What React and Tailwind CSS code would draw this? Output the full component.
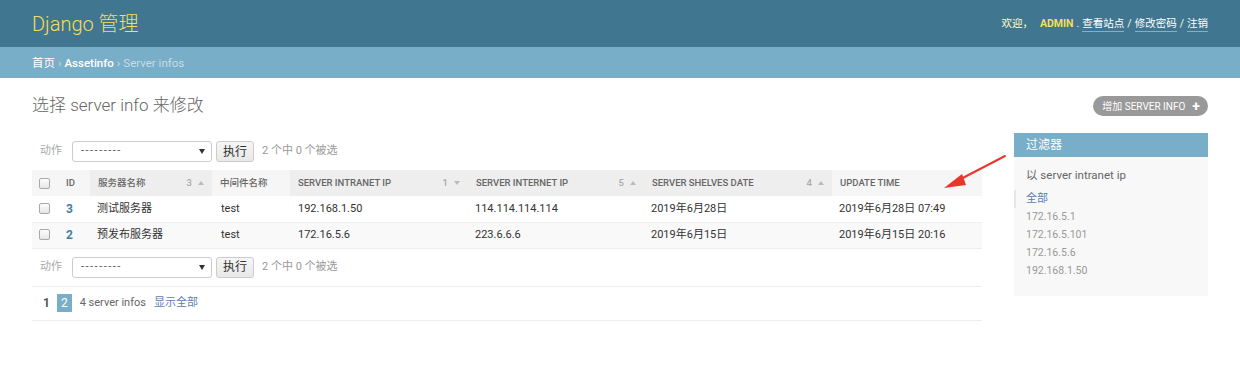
import React from "react";

const font = { fontFamily: 'Roboto, "Noto Sans CJK SC", "Liberation Sans", sans-serif' };

function Check() {
  return (
    <span className="inline-block w-[11px] h-[11px] rounded-[2px] border border-[#a9a9a9] bg-gradient-to-b from-[#fdfdfd] to-[#e6e6e6] align-middle" />
  );
}

function SortMark({ n, dir }) {
  return (
    <span className="ml-auto flex items-center gap-[6px] text-[9.5px] text-[#aaa] pr-[8px]">
      {n}
      {dir === "up" ? (
        <span className="w-0 h-0 border-x-[3.5px] border-x-transparent border-b-[4px] border-b-[#bbb]" />
      ) : (
        <span className="w-0 h-0 border-x-[3.5px] border-x-transparent border-t-[4px] border-t-[#bbb]" />
      )}
    </span>
  );
}

function Actions() {
  return (
    <div className="flex items-center h-[37px] pl-[8px] text-[11px]">
      <span className="text-[#aaa] w-[32px]">动作</span>
      <div className="flex items-center w-[140px] h-[21px] border border-[#ccc] rounded-[3px] bg-white pl-[8px] pr-[6px] text-[11px] text-[#555]">
        <span className="tracking-[1.5px]">---------</span>
        <span className="ml-auto w-0 h-0 border-x-[3px] border-x-transparent border-t-[5px] border-t-[#333]" />
      </div>
      <div className="ml-[4px] h-[21px] px-[6px] flex items-center border border-[#ccc] rounded-[3px] bg-gradient-to-b from-[#f6f6f6] to-[#e8e8e8] text-[#333] text-[12px]">
        执行
      </div>
      <span className="ml-[8px] text-[#999] text-[11px]">2 个中 0 个被选</span>
    </div>
  );
}

const cols = [
  { w: "w-[23px]", label: null },
  { w: "w-[35px]", label: "ID" },
  { w: "w-[122px]", label: "服务器名称", sort: ["3", "up"] },
  { w: "w-[78px]", label: "中间件名称" },
  { w: "w-[178px]", label: "SERVER INTRANET IP", sort: ["1", "down"] },
  { w: "w-[176px]", label: "SERVER INTERNET IP", sort: ["5", "up"] },
  { w: "w-[188px]", label: "SERVER SHELVES DATE", sort: ["4", "up"] },
  { w: "w-[150px]", label: "UPDATE TIME" },
];

const rows = [
  ["3", "测试服务器", "test", "192.168.1.50", "114.114.114.114", "2019年6月28日", "2019年6月28日 07:49"],
  ["2", "预发布服务器", "test", "172.16.5.6", "223.6.6.6", "2019年6月15日", "2019年6月15日 20:16"],
];

export default function App() {
  return (
    <div className="w-[1240px] h-[366px] bg-white relative overflow-hidden" style={font}>
      {/* Header */}
      <div className="h-[47px] bg-[#417690] flex items-center justify-between px-[32px]">
        <div className="text-[20px] font-light text-[#f5dd5d]">Django 管理</div>
        <div className="text-[10.5px] text-[#ffc] flex items-center gap-[3px] mt-[1px]">
          <span>欢迎，</span>
          <span className="font-bold text-[#f5dd5d] ml-[4px]">ADMIN</span>
          <span>.</span>
          <span className="text-white border-b border-white/40">查看站点</span>
          <span>/</span>
          <span className="text-white border-b border-white/40">修改密码</span>
          <span>/</span>
          <span className="text-white border-b border-white/40">注销</span>
        </div>
      </div>
      {/* Breadcrumbs */}
      <div className="h-[31px] bg-[#79aec8] flex items-center px-[32px] pt-[2px] text-[11.5px] text-[#c4dce8] gap-[3px]">
        <span className="text-white">首页</span>
        <span>›</span>
        <span className="text-white font-medium">Assetinfo</span>
        <span>›</span>
        <span>Server infos</span>
      </div>

      {/* Content */}
      <div className="px-[32px] pt-[17px]">
        <div className="flex items-center justify-between h-[22px]">
          <h1 className="text-[17px] font-light text-[#666]">选择 server info 来修改</h1>
          <div className="h-[20px] rounded-full bg-[#999] text-white text-[10px] flex items-center gap-[7px] pl-[9px] pr-[8px]">
            <span>增加 SERVER INFO</span>
            <span className="font-bold text-[14px] leading-none">+</span>
          </div>
        </div>

        <div className="flex mt-[16px] gap-[32px]">
          {/* Changelist */}
          <div className="w-[950px]">
            <Actions />
            <table className="table-fixed w-[950px] border-collapse">
              <thead>
                <tr className="h-[26px] text-[9.5px] text-[#666]">
                  {cols.map((c, i) => (
                    <th
                      key={i}
                      className={`${c.w} p-0 font-medium text-left ${c.sort ? "bg-[#eeeeee]" : "bg-[#f6f6f6]"}`}
                    >
                      <div className={`flex items-center ${i === 0 ? "pl-[7px]" : i === 1 ? "pl-[11px]" : "pl-[8px]"}`}>
                        {i === 0 ? <Check /> : <span>{c.label}</span>}
                        {c.sort && <SortMark n={c.sort[0]} dir={c.sort[1]} />}
                      </div>
                    </th>
                  ))}
                </tr>
              </thead>
              <tbody>
                {rows.map((r, ri) => (
                  <tr key={ri} className={`h-[26px] text-[11px] text-[#333] border-b border-[#eee] ${ri === 1 ? "bg-[#f9f9f9]" : "bg-white"}`}>
                    <td className="p-0 pl-[7px]"><Check /></td>
                    <td className="p-0 pl-[11px] font-bold text-[#447e9b] text-[12px]">{r[0]}</td>
                    <td className="p-0 pl-[7px]">{r[1]}</td>
                    <td className="p-0 pl-[9px]">{r[2]}</td>
                    <td className="p-0 pl-[8px]">{r[3]}</td>
                    <td className="p-0 pl-[7px]">{r[4]}</td>
                    <td className="p-0 pl-[7px]">{r[5]}</td>
                    <td className="p-0 pl-[7px]">{r[6]}</td>
                  </tr>
                ))}
              </tbody>
            </table>
            <div className="border-b border-[#eee]">
              <Actions />
            </div>
            <div className="h-[34px] flex items-center pl-[11px] text-[11px] text-[#666] border-b border-[#eee]">
              <span className="font-bold text-[#555] text-[12px]">1</span>
              <span className="ml-[7px] bg-[#79aec8] text-white text-[12px] px-[4px] leading-[18px]">2</span>
              <span className="ml-[8px]">4 server infos</span>
              <span className="ml-[8px] text-[#5b80b2]">显示全部</span>
            </div>
          </div>

          {/* Filter */}
          <div className="w-[194px] h-[163px] bg-[#f8f8f8]">
            <div className="h-[24px] bg-[#79aec8] text-white text-[12px] flex items-center pl-[12px]">过滤器</div>
            <div className="pl-[12px] pt-[10px] text-[11.5px] text-[#666]">以 server intranet ip</div>
            <ul className="mt-[6px] text-[10.5px] text-[#999] leading-[18px]">
              <li className="pl-[10px] border-l-[2px] border-[#e5e5e5] text-[#5b80b2] text-[11px]">全部</li>
              <li className="pl-[12px]">172.16.5.1</li>
              <li className="pl-[12px]">172.16.5.101</li>
              <li className="pl-[12px]">172.16.5.6</li>
              <li className="pl-[12px]">192.168.1.50</li>
            </ul>
          </div>
        </div>
      </div>

      {/* Red annotation arrow */}
      <svg className="absolute left-[935px] top-[150px]" width="80" height="45" viewBox="0 0 80 45">
        <line x1="70" y1="6" x2="20" y2="32" stroke="#e8372c" strokeWidth="2" strokeLinecap="round" />
        <polygon points="9,38 27,24 31,35" fill="#e8372c" />
      </svg>
    </div>
  );
}
